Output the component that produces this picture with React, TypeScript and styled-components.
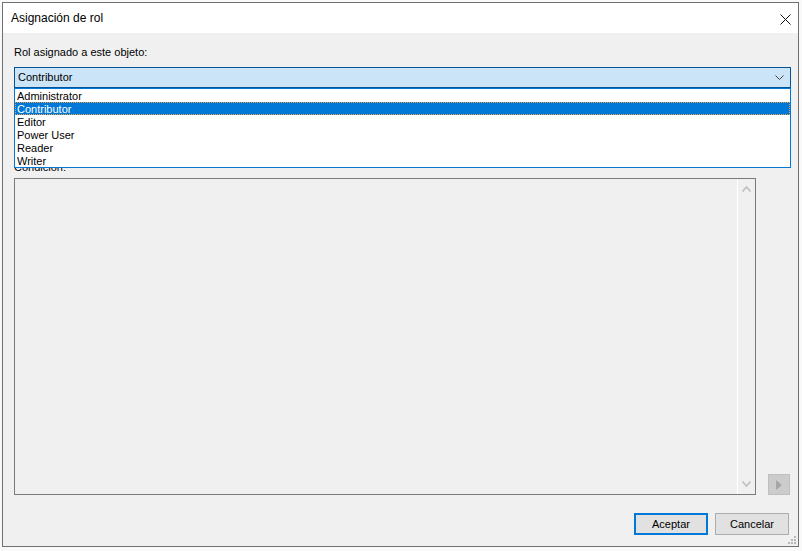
import React, {useState} from "react";
import styled, {createGlobalStyle} from "styled-components";

const GlobalStyle = createGlobalStyle`
  html, body {
    margin: 0;
    padding: 0;
    background: #f9f9f9;
  }

  body {
    font-family: "Liberation Sans", Arial, sans-serif;
    font-size: 11px;
    color: #000;
  }
`;

const Dialog = styled.div`
  position: relative;
  box-sizing: border-box;
  width: 797px;
  height: 545px;
  margin: 2px 0 0 2px;
  display: flex;
  flex-direction: column;
  background: #f0f0f0;
  border: 1px solid #707070;
`;

const TitleBar = styled.div`
  height: 30px;
  flex-shrink: 0;
  display: flex;
  align-items: center;
  padding: 0 7px 0 8px;
  background: #fff;
`;

const Title = styled.div`
  font-size: 12px;
  line-height: 16px;
  margin-top: -1px;
`;

const CloseButton = styled.div`
  margin-left: auto;
  width: 12px;
  height: 12px;
  display: flex;
  align-items: center;
  justify-content: center;
  margin-top: 3px;
`;

const Body = styled.div`
  flex: 1;
  display: flex;
  flex-direction: column;
  padding: 13px 7px 0 11px;
`;

const Label = styled.div<{$gap?: number}>`
  line-height: 13px;
  height: 13px;
  margin-top: ${p => p.$gap ?? 0}px;
  white-space: nowrap;
`;

const ComboWrap = styled.div`
  position: relative;
  margin-top: 8px;
`;

const Combo = styled.div`
  box-sizing: border-box;
  height: 21px;
  display: flex;
  align-items: center;
  padding: 0 6px 0 3px;
  background: #cce4f7;
  border: 1px solid #005499;
`;

const ComboText = styled.span`
  flex: 1;
  line-height: 13px;
`;

const DropList = styled.div`
  position: absolute;
  top: 100%;
  left: 0;
  right: 0;
  z-index: 10;
  background: #fff;
  border: 1px solid #0078d7;
`;

const Item = styled.div<{$selected?: boolean}>`
  box-sizing: border-box;
  height: 13px;
  line-height: 12px;
  padding-left: 1px;
  white-space: nowrap;
  border: 1px dotted transparent;
  background: ${p => (p.$selected ? "#0078d7" : "#fff")};
  color: ${p => (p.$selected ? "#fff" : "#000")};
  border-color: ${p => (p.$selected ? "#f0a040" : "transparent")};
  cursor: default;
`;

const EditorRow = styled.div`
  display: flex;
  align-items: flex-end;
  gap: 12px;
  margin-top: 4px;
  margin-right: 1px;
`;

const Editor = styled.div`
  box-sizing: border-box;
  flex: 1;
  height: 317px;
  display: flex;
  justify-content: flex-end;
  background: #f0f0f0;
  border: 1px solid #7a7a7a;
`;

const ScrollBar = styled.div`
  width: 17px;
  display: flex;
  flex-direction: column;
  justify-content: space-between;
  align-items: center;
  padding: 7px 0;
  border-left: 1px solid #fff;
`;

const SideButton = styled.div`
  box-sizing: border-box;
  width: 22px;
  height: 21px;
  display: flex;
  align-items: center;
  justify-content: center;
  background: #cccccc;
  border: 1px solid #bfbfbf;
`;

const Footer = styled.div`
  display: flex;
  justify-content: flex-end;
  gap: 7px;
  margin-top: 18px;
  padding-right: 2px;
`;

const Button = styled.button<{$primary?: boolean}>`
  box-sizing: border-box;
  width: 74px;
  height: 22px;
  padding: 0;
  font-family: "Liberation Sans", Arial, sans-serif;
  font-size: 11px;
  color: #000;
  background: #e1e1e1;
  border: ${p => (p.$primary ? "2px solid #0078d7" : "1px solid #adadad")};
  outline: none;
`;

const Grip = styled.div`
  position: absolute;
  right: 1px;
  bottom: 1px;
  width: 10px;
  height: 10px;
`;

const roles = ["Administrator", "Contributor", "Editor", "Power User", "Reader", "Writer"];

const Chevron = ({dir}: {dir: "up" | "down"}) => (
	<svg width="9" height="6" viewBox="0 0 9 6">
		<path d={dir === "up" ? "M0.5 5.5 L4.5 1 L8.5 5.5" : "M0.5 0.5 L4.5 5 L8.5 0.5"} fill="none" stroke="#c2c2c2" strokeWidth="1.8"/>
	</svg>
);

const App = () => {
	const [selected, setSelected] = useState("Contributor");

	return (
		<>
			<GlobalStyle/>
			<Dialog>
				<TitleBar>
					<Title>Asignación de rol</Title>
					<CloseButton>
						<svg width="11" height="11" viewBox="0 0 11 11">
							<path d="M0.5 0.5 L10.5 10.5 M10.5 0.5 L0.5 10.5" stroke="#111" strokeWidth="1"/>
						</svg>
					</CloseButton>
				</TitleBar>

				<Body>
					<Label>Rol asignado a este objeto:</Label>
					<ComboWrap>
						<Combo>
							<ComboText>{selected}</ComboText>
							<svg width="9" height="5" viewBox="0 0 9 5">
								<path d="M0.5 0.5 L4.5 4.5 L8.5 0.5" fill="none" stroke="#444" strokeWidth="1"/>
							</svg>
						</Combo>
						<DropList>
							{roles.map(role =>
								<Item key={role} $selected={role === selected} onClick={() => setSelected(role)}>{role}</Item>,
							)}
						</DropList>
					</ComboWrap>

					<Label $gap={73}>Condición:</Label>
					<EditorRow>
						<Editor>
							<ScrollBar>
								<Chevron dir="up"/>
								<Chevron dir="down"/>
							</ScrollBar>
						</Editor>
						<SideButton>
							<svg width="6" height="10" viewBox="0 0 6 10">
								<path d="M0 0 L6 5 L0 10 Z" fill="#a6a6a6"/>
							</svg>
						</SideButton>
					</EditorRow>

					<Footer>
						<Button $primary>Aceptar</Button>
						<Button>Cancelar</Button>
					</Footer>
				</Body>

				<Grip>
					<svg width="10" height="10" viewBox="0 0 10 10" fill="#b8b8b8">
						<rect x="7" y="1" width="2" height="2"/>
						<rect x="4" y="4" width="2" height="2"/>
						<rect x="7" y="4" width="2" height="2"/>
						<rect x="1" y="7" width="2" height="2"/>
						<rect x="4" y="7" width="2" height="2"/>
						<rect x="7" y="7" width="2" height="2"/>
					</svg>
				</Grip>
			</Dialog>
		</>
	);
};

export default App;
